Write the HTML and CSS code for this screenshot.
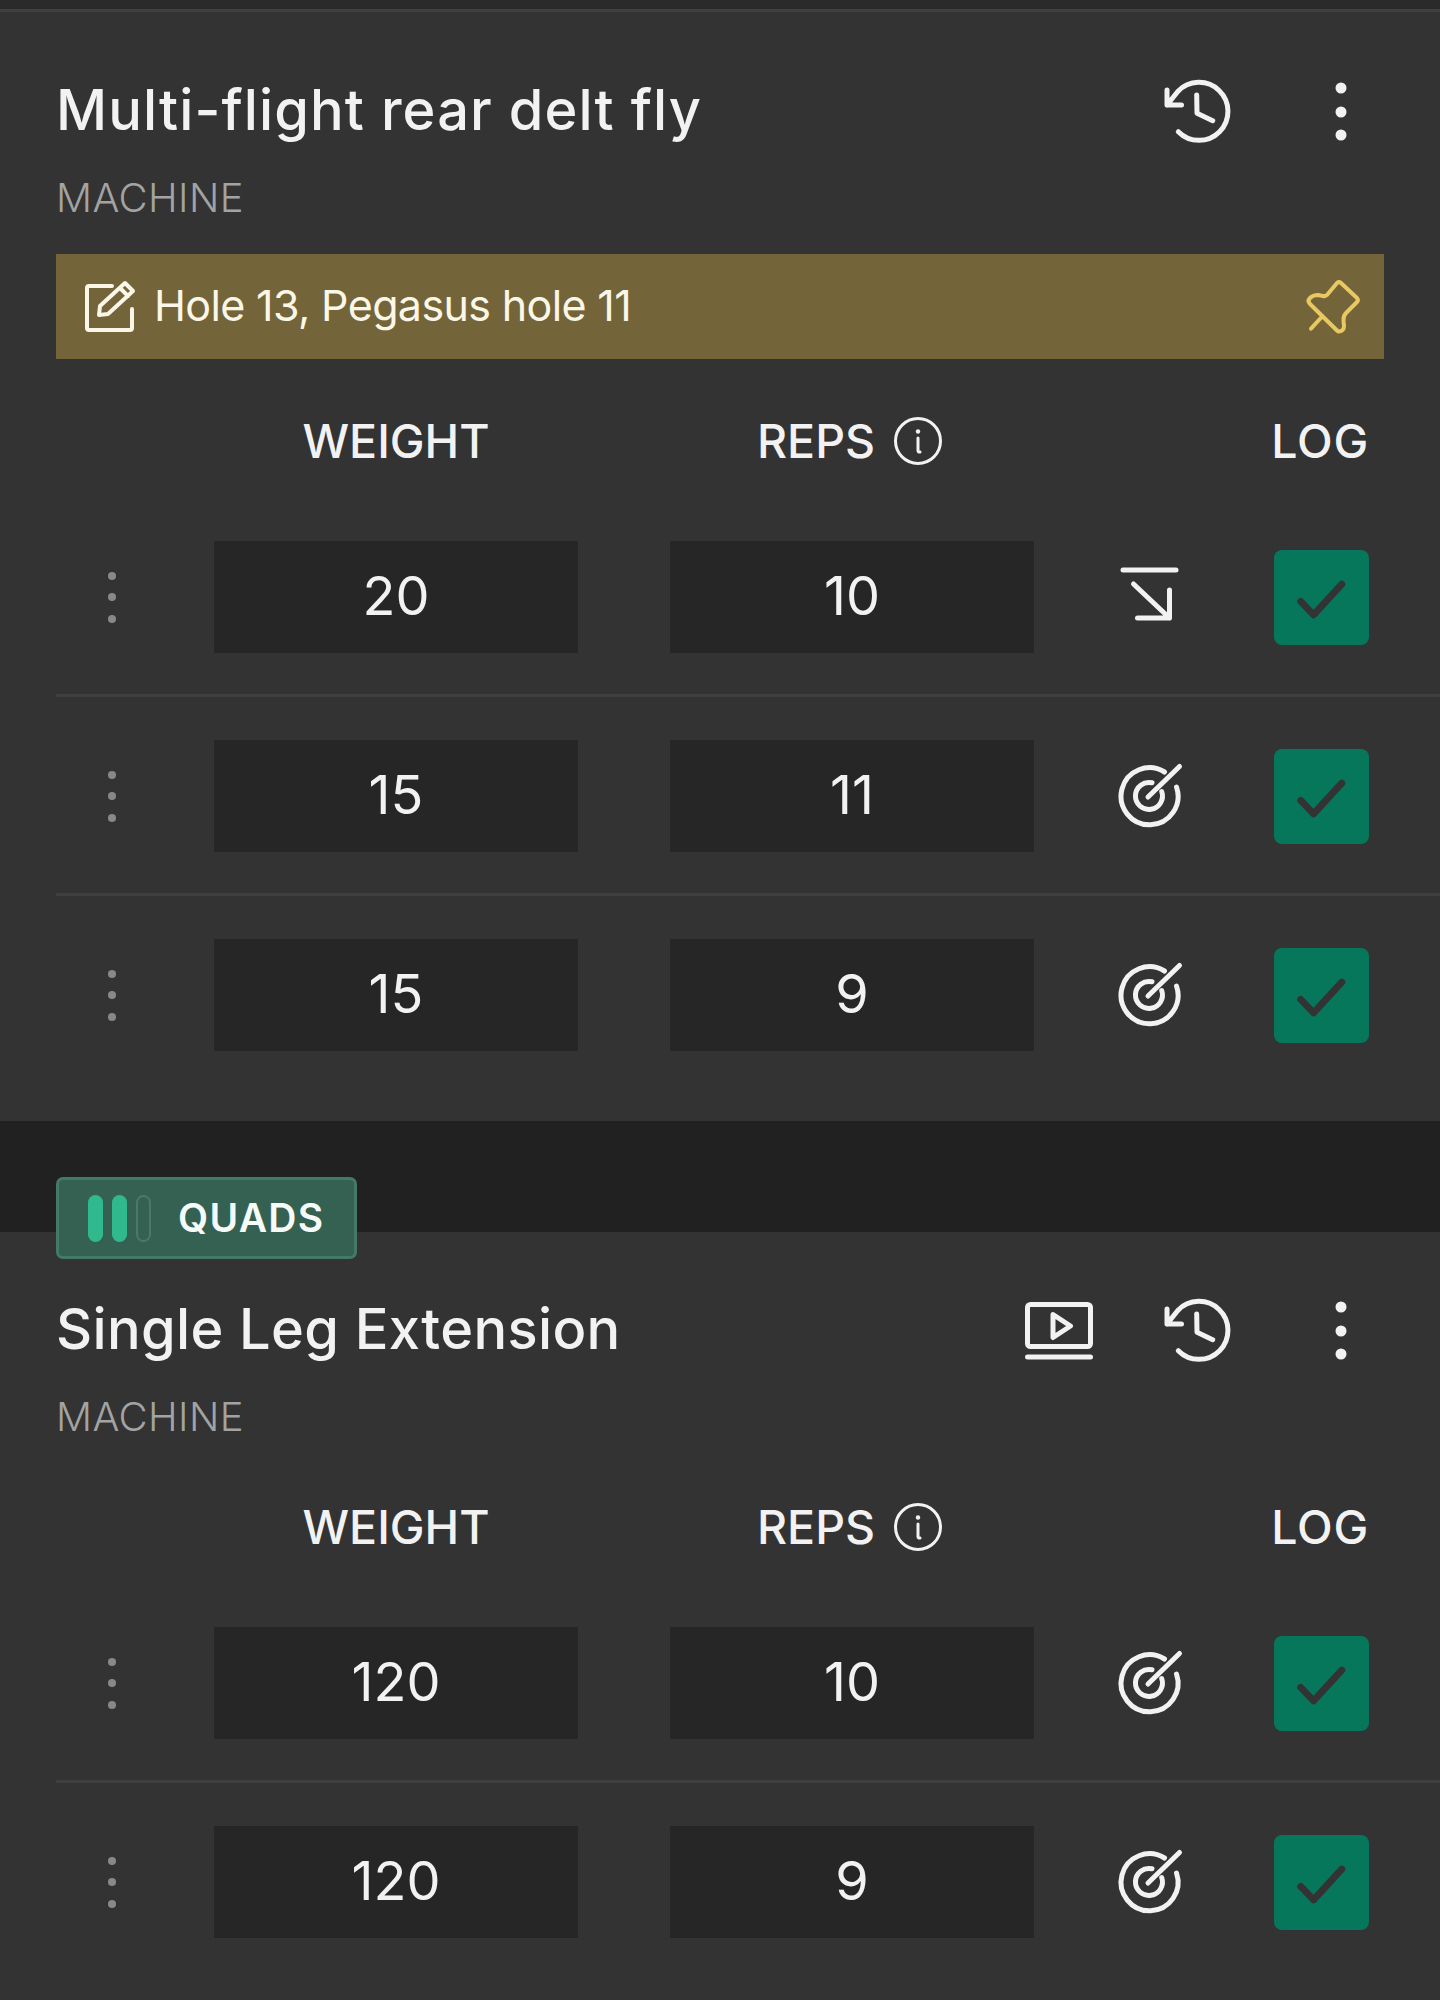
FILE: index.html
```html
<!doctype html>
<html>
<head>
  <meta charset="utf-8">
  <title>Workout</title>
  <link rel="stylesheet" href="styles.css">
</head>
<body>

  <svg class="sprite">
    <symbol id="i-history" viewBox="0 0 72 72">
      <path class="line" d="M15.3 55.7A29 29 0 1 0 14.8 15.5L4 29V14M4 29H18.5"/>
      <path class="line" d="M33.7 19L34 37.3L49.7 44.7"/>
    </symbol>
    <symbol id="i-more" viewBox="0 0 72 72">
      <circle cx="36" cy="12" r="5.5"/><circle cx="36" cy="36" r="5.5"/><circle cx="36" cy="59" r="5.5"/>
    </symbol>
    <symbol id="i-video" viewBox="0 0 72 72">
      <rect class="line" x="6.5" y="9.5" width="63" height="42" rx="3"/>
      <path class="line" d="M6.5 62H69.5"/>
      <path class="line" d="M32 19.500L49.500 31L32 42.500Z"/>
    </symbol>
    <symbol id="i-target" viewBox="0 0 72 72">
      <path class="line" d="M51.500 12A28.500 28.500 0 1 0 63.500 27"/>
      <path class="line" d="M39 22.800A13.500 13.500 0 1 0 48.700 31.500"/>
      <path class="line" d="M35 37L66.500 6.500"/>
    </symbol>
    <symbol id="i-drop" viewBox="0 0 72 72">
      <path class="line" d="M10 9H63"/>
      <path class="line" d="M20.500 23L56.500 57V29M56.500 57H24.500"/>
    </symbol>
    <symbol id="i-check" viewBox="0 0 96 96">
      <path class="line line-bold" d="M27 52L40 65.500L68.500 34.500"/>
    </symbol>
    <symbol id="i-info" viewBox="0 0 50 50">
      <circle class="line line-thin" cx="25" cy="25" r="22.500"/>
      <circle class="dot" cx="25" cy="15.500" r="2.200"/>
      <path class="line line-thin" d="M25 22V34.500Q25 36.500 27 36"/>
    </symbol>
    <symbol id="i-note" viewBox="0 0 56 56">
      <path class="line line-mid" d="M32 7H9A2 2 0 0 0 7 9V49A2 2 0 0 0 9 51H50A2 2 0 0 0 52 49V30"/>
      <path class="line line-mid" d="M19 36L20 27L45 4L53 12L28 35ZM40 9L48 17"/>
    </symbol>
    <symbol id="i-pin" viewBox="0 0 60 60">
      <path class="line line-mid" d="M34 6A3 3 0 0 1 38 6L54 21A3 3 0 0 1 54 25L43 36Q40 39 40.500 44L41 49Q41 54 36 54.500Q35 54.500 34 53.500L7 27Q4 24 7 21Q10 18 15 18L20 19Q22 19.500 24 18ZM18.700 40L8 51.700"/>
    </symbol>
  </svg>

  <div class="strip"></div>

  <section class="card">
    <div class="ex-head">
      <h2 class="ex-title ex-title-wide">Multi-flight rear delt fly</h2>
      <div class="ex-actions">
        <svg class="icon"><use href="#i-history"/></svg>
        <svg class="icon"><use href="#i-more"/></svg>
      </div>
    </div>
    <div class="ex-type">MACHINE</div>

    <div class="note">
      <svg class="note-icon"><use href="#i-note"/></svg>
      <span class="note-text">Hole 13, Pegasus hole 11</span>
      <svg class="pin-icon"><use href="#i-pin"/></svg>
    </div>

    <div class="set-head">
      <div class="col-weight">WEIGHT</div>
      <div class="col-reps">REPS <svg class="info-icon"><use href="#i-info"/></svg></div>
      <div class="col-log">LOG</div>
    </div>

    <div class="set">
      <div class="handle"><i></i><i></i><i></i></div>
      <div class="field">20</div>
      <div class="field field-reps">10</div>
      <svg class="set-icon"><use href="#i-drop"/></svg>
      <svg class="check"><use href="#i-check"/></svg>
    </div>
    <div class="set">
      <div class="handle"><i></i><i></i><i></i></div>
      <div class="field">15</div>
      <div class="field field-reps">11</div>
      <svg class="set-icon"><use href="#i-target"/></svg>
      <svg class="check"><use href="#i-check"/></svg>
    </div>
    <div class="set">
      <div class="handle"><i></i><i></i><i></i></div>
      <div class="field">15</div>
      <div class="field field-reps">9</div>
      <svg class="set-icon"><use href="#i-target"/></svg>
      <svg class="check"><use href="#i-check"/></svg>
    </div>
  </section>

  <section class="card card-next">
    <div class="badge">
      <span class="bar on"></span><span class="bar on"></span><span class="bar"></span>
      <span class="badge-text">QUADS</span>
    </div>
    <div class="ex-head">
      <h2 class="ex-title">Single Leg Extension</h2>
      <div class="ex-actions">
        <svg class="icon"><use href="#i-video"/></svg>
        <svg class="icon"><use href="#i-history"/></svg>
        <svg class="icon"><use href="#i-more"/></svg>
      </div>
    </div>
    <div class="ex-type">MACHINE</div>

    <div class="set-head">
      <div class="col-weight">WEIGHT</div>
      <div class="col-reps">REPS <svg class="info-icon"><use href="#i-info"/></svg></div>
      <div class="col-log">LOG</div>
    </div>

    <div class="set">
      <div class="handle"><i></i><i></i><i></i></div>
      <div class="field">120</div>
      <div class="field field-reps">10</div>
      <svg class="set-icon"><use href="#i-target"/></svg>
      <svg class="check"><use href="#i-check"/></svg>
    </div>
    <div class="set">
      <div class="handle"><i></i><i></i><i></i></div>
      <div class="field">120</div>
      <div class="field field-reps">9</div>
      <svg class="set-icon"><use href="#i-target"/></svg>
      <svg class="check"><use href="#i-check"/></svg>
    </div>
  </section>

</body>
</html>
```

FILE: styles.css
```css
body {
  margin: 0;
  background-color: #212121;
  font-family: Inter, "Noto Sans", sans-serif;
  color: #f2f2f2;
}
.sprite {
  display: none;
}
.line {
  fill: none;
  stroke: currentColor;
  stroke-width: 5;
  stroke-linecap: round;
  stroke-linejoin: round;
}
.line-thin {
  stroke-width: 3;
}
.line-mid {
  stroke-width: 4;
}
.line-bold {
  stroke-width: 7;
}
.dot {
  fill: currentColor;
}
.strip {
  height: 9px;
  background: #2a2a2a;
}
.card {
  position: relative;
  background: #333333;
  border-top: 3px solid #3f3f3f;
  padding: 56px 0 28px;
}
.card-next {
  margin-top: 111px;
  border-top: none;
  padding-top: 55px;
  padding-bottom: 63px;
}
.ex-head {
  display: flex;
  align-items: center;
  justify-content: space-between;
  padding: 0 63px 0 56px;
  height: 84px;
}
.ex-title {
  margin: 0;
  font-size: 56px;
  font-weight: 500;
  letter-spacing: 0.35px;
  line-height: 84px;
}
.ex-title-wide {
  letter-spacing: 1.1px;
}
.ex-actions {
  display: flex;
  gap: 70px;
  padding-top: 4px;
  fill: #f2f2f2;
}
.icon {
  width: 72px;
  height: 72px;
}
.ex-type {
  margin: 16px 0 0 56px;
  font-size: 40px;
  font-weight: 300;
  letter-spacing: 0.4px;
  line-height: 60px;
  color: #a3a3a3;
}
.note {
  display: flex;
  align-items: center;
  margin: 26px 56px 0;
  padding: 0 21px 0 24px;
  height: 105px;
  background: #736539;
  color: #fbf7e8;
}
.note-icon {
  width: 56px;
  height: 56px;
}
.note-text {
  margin: 0 0 4px 18px;
  font-size: 43px;
  font-weight: 400;
  letter-spacing: -0.64px;
}
.pin-icon {
  margin-left: auto;
  width: 60px;
  height: 60px;
  color: #e8c862;
}
.set-head {
  display: flex;
  align-items: center;
  margin: 54px 0 29px 214px;
  padding-right: 71px;
  height: 56px;
  font-size: 46.500px;
  font-weight: 500;
}
.card-next .set-head {
  margin-top: 52px;
}
.col-weight {
  width: 364px;
  text-align: center;
}
.col-reps {
  display: flex;
  align-items: center;
  justify-content: center;
  gap: 18px;
  box-sizing: border-box;
  width: 364px;
  margin-left: 92px;
  padding-right: 4px;
}
.info-icon {
  width: 50px;
  height: 50px;
}
.col-log {
  margin-left: auto;
  letter-spacing: 0.8px;
}
.set {
  display: flex;
  align-items: center;
  margin-left: 56px;
  padding: 43px 71px 41px 0;
  border-bottom: 3px solid #3f3f3f;
}
.set:last-child {
  padding-bottom: 42px;
  border-bottom: none;
}
.handle {
  display: flex;
  flex-direction: column;
  gap: 13.5px;
  width: 158px;
  padding-left: 52px;
  box-sizing: border-box;
}
.handle i {
  width: 8px;
  height: 8px;
  border-radius: 50%;
  background: #888888;
}
.field {
  width: 364px;
  height: 112px;
  background: #262626;
  text-align: center;
  font-size: 54px;
  font-weight: 400;
  line-height: 110px;
}
.field-reps {
  margin-left: 92px;
}
.set-icon {
  width: 72px;
  height: 72px;
  margin-left: 79px;
}
.check {
  margin-left: auto;
  width: 95px;
  height: 95px;
  border-radius: 8px;
  background: #06775a;
  color: #333333;
}
.badge {
  position: absolute;
  left: 56px;
  top: -55px;
  display: flex;
  align-items: center;
  gap: 9px;
  box-sizing: border-box;
  width: 301px;
  height: 82px;
  padding-left: 29px;
  background: #356152;
  border: 3px solid #437a66;
  border-radius: 7px;
}
.bar {
  box-sizing: border-box;
  width: 15px;
  height: 47px;
  border: 2px solid #487a69;
  border-radius: 8px;
}
.bar.on {
  border: none;
  background: #2fb98c;
}
.badge-text {
  margin: 0 0 2px 18px;
  font-size: 39px;
  font-weight: 600;
  letter-spacing: 1.3px;
  color: #f6fbf9;
}
```
